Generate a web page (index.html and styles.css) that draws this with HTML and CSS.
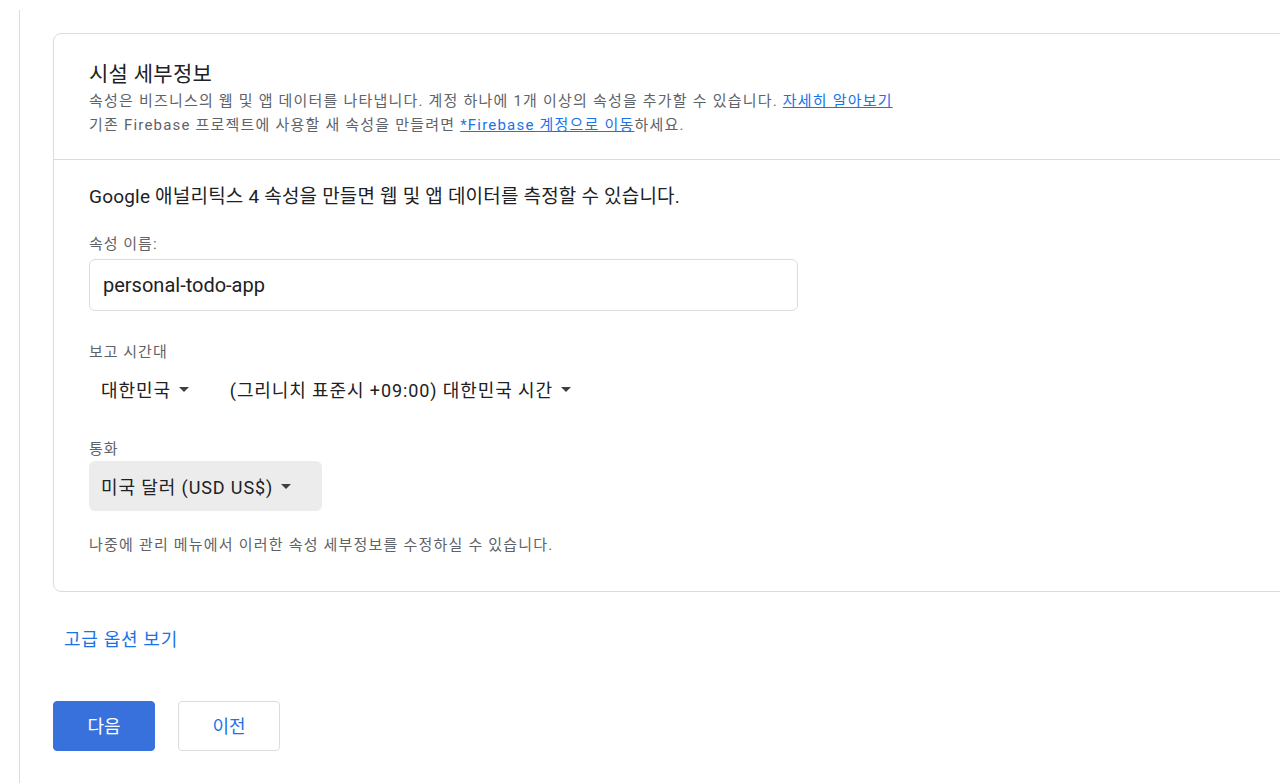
FILE: index.html
```html
<!DOCTYPE html>
<html lang="ko">
<head>
<meta charset="utf-8">
<title>시설 세부정보</title>
<link rel="stylesheet" href="styles.css">
</head>
<body>
<div class="page">
  <section class="card">
    <header class="card-head">
      <h1 class="title">시설 세부정보</h1>
      <p class="desc">속성은 비즈니스의 웹 및 앱 데이터를 나타냅니다. 계정 하나에 1개 이상의 속성을 추가할 수 있습니다. <a class="link" href="#">자세히 알아보기</a></p>
      <p class="desc">기존 Firebase 프로젝트에 사용할 새 속성을 만들려면 <a class="link" href="#">*Firebase 계정으로 이동</a>하세요.</p>
    </header>
    <div class="card-body">
      <p class="lead">Google 애널리틱스 4 속성을 만들면 웹 및 앱 데이터를 측정할 수 있습니다.</p>
      <label class="label label-name">속성 이름:</label>
      <div class="input">personal-todo-app</div>
      <div class="label label-tz">보고 시간대</div>
      <div class="dropdowns">
        <div class="dropdown">대한민국<span class="caret"></span></div>
        <div class="dropdown">(그리니치 표준시 +09:00) 대한민국 시간<span class="caret"></span></div>
      </div>
      <div class="label label-cur">통화</div>
      <div class="select-filled">미국 달러 (USD US$)<span class="caret"></span></div>
      <p class="note">나중에 관리 메뉴에서 이러한 속성 세부정보를 수정하실 수 있습니다.</p>
    </div>
  </section>
  <a class="advanced" href="#">고급 옵션 보기</a>
  <div class="actions">
    <button class="btn btn-primary">다음</button>
    <button class="btn btn-outline">이전</button>
  </div>
</div>
</body>
</html>
```
FILE: styles.css
```css
html, body {
  margin: 0;
  padding: 0;
  background: #ffffff;
  overflow: hidden;
  height: 100%;
}
body {
  font-family: Roboto, "Noto Sans CJK KR", sans-serif;
  color: #202124;
}
.page {
  margin-left: 19px;
  margin-top: 10px;
  border-left: 1px solid #dadce0;
  min-height: 800px;
  padding-top: 23px;
  padding-left: 33px;
  box-sizing: border-box;
}
.card {
  width: 1400px;
  border: 1px solid #dadce0;
  border-radius: 8px;
  box-sizing: border-box;
}
.card-head {
  padding: 26px 35px 22px;
  border-bottom: 1px solid #dadce0;
}
.title {
  margin: 0 0 1px;
  font-size: 21px;
  line-height: 28px;
  font-weight: 400;
  letter-spacing: 0.3px;
  color: #202124;
}
.desc {
  margin: 0;
  font-size: 15px;
  line-height: 24px;
  letter-spacing: 1.2px;
  color: #5f6368;
}
.link {
  color: #1a73e8;
  text-decoration: underline;
}
.card-body {
  padding: 25px 35px 36px;
}
.lead {
  margin: 0;
  font-size: 19px;
  line-height: 24px;
  letter-spacing: 0.2px;
  color: #202124;
}
.label {
  display: block;
  font-size: 15px;
  line-height: 20px;
  letter-spacing: 1px;
  color: #5f6368;
}
.label-name { margin-top: 25px; }
.input {
  margin-top: 5px;
  width: 709px;
  height: 52px;
  box-sizing: border-box;
  border: 1px solid #dadce0;
  border-radius: 6px;
  padding: 0 13px;
  display: flex;
  align-items: center;
  font-size: 20px;
  color: #202124;
}
.label-tz { margin-top: 31px; }
.dropdowns {
  margin-top: 9px;
  display: flex;
  gap: 17px;
}
.dropdown {
  height: 36px;
  padding: 0 12px;
  display: flex;
  align-items: center;
  font-size: 18px;
  letter-spacing: 0.9px;
  color: #202124;
}
.caret {
  display: inline-block;
  width: 0;
  height: 0;
  margin-left: 8px;
  border-left: 5px solid transparent;
  border-right: 5px solid transparent;
  border-top: 5px solid #3c4043;
}
.label-cur { margin-top: 32px; }
.select-filled {
  margin-top: 2px;
  display: inline-flex;
  align-items: center;
  height: 50px;
  padding: 0 31px 0 12px;
  background: #ececec;
  border-radius: 6px;
  font-size: 18px;
  letter-spacing: 0.9px;
  color: #202124;
}
.note {
  margin: 24px 0 0;
  font-size: 15px;
  line-height: 20px;
  letter-spacing: 1.2px;
  color: #5f6368;
}
.advanced {
  display: inline-block;
  margin: 36px 0 0 11px;
  font-size: 18px;
  line-height: 24px;
  letter-spacing: 0.7px;
  color: #1a73e8;
  text-decoration: none;
}
.actions {
  margin-top: 49px;
  display: flex;
  gap: 23px;
}
.btn {
  width: 102px;
  height: 50px;
  border-radius: 4px;
  font-family: Roboto, "Noto Sans CJK KR", sans-serif;
  font-size: 18px;
  padding-bottom: 3px;
  cursor: pointer;
  box-sizing: border-box;
}
.btn-primary {
  background: #3871dc;
  border: 1px solid #3871dc;
  color: #ffffff;
}
.btn-outline {
  background: #ffffff;
  border: 1px solid #dadce0;
  color: #1a73e8;
}
```
